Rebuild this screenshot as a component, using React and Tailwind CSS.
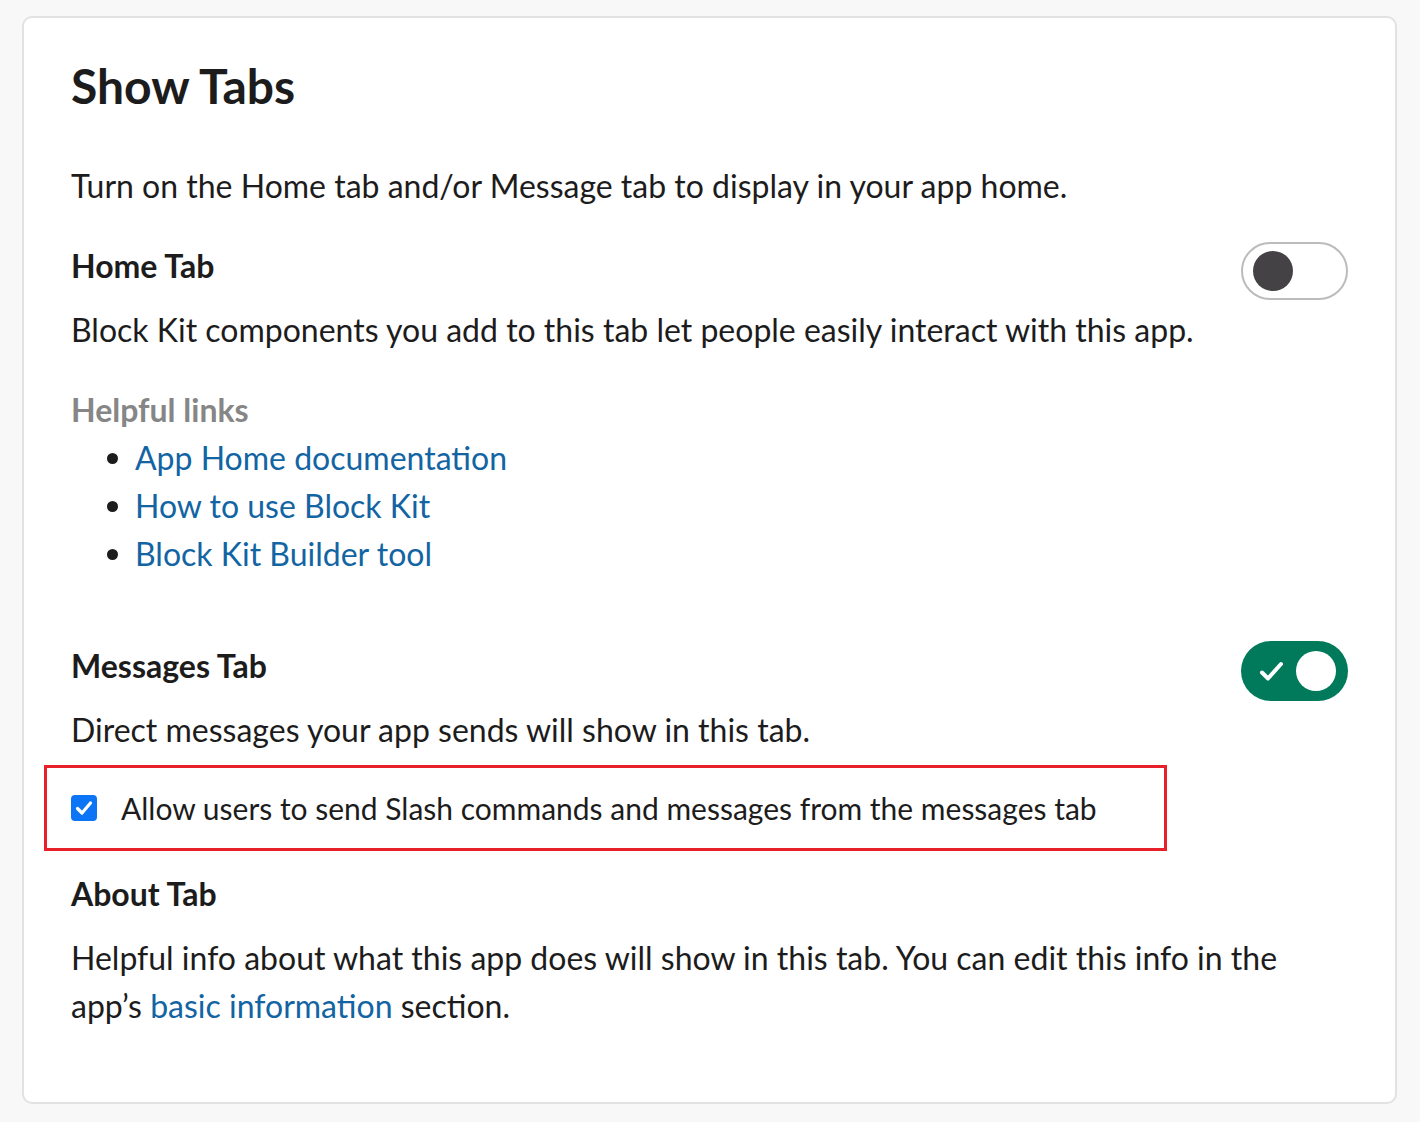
import React from 'react';

const links = ['App Home documentation', 'How to use Block Kit', 'Block Kit Builder tool'];

const ToggleOff = () => (
  <div className="w-[107px] h-[58px] rounded-full border-2 border-[#bcbcbc] bg-white flex items-center pl-[10px] shrink-0">
    <div className="w-[40px] h-[40px] rounded-full bg-[#454245]"></div>
  </div>
);

const ToggleOn = () => (
  <div className="w-[107px] h-[60px] rounded-full bg-[#007a5a] flex items-center justify-between pl-[18px] pr-[12px] shrink-0">
    <svg width="25" height="21" viewBox="0 0 25 21" fill="none">
      <path d="M3 11.5 L9 17.5 L22 3" stroke="white" strokeWidth="4" strokeLinecap="round" strokeLinejoin="round" />
    </svg>
    <div className="w-[40px] h-[40px] rounded-full bg-white"></div>
  </div>
);

const App = () => {
  return (
    <div className="min-h-screen bg-[#f8f8f8] pt-[16px] pl-[22px] pr-[23px] pb-[19px] font-['Lato',sans-serif] text-[#1d1c1d]">
      <div className="bg-white border-2 border-[#e2e2e2] rounded-[10px] pl-[48px] pr-[47px] pt-[40px] pb-[72px]">
        <h1 className="-ml-px -mt-px text-[48px] leading-[58px] font-bold">Show Tabs</h1>

        <p className="-ml-px mt-[47px] text-[32px] leading-[48px]">
          Turn on the Home tab and/or Message tab to display in your app home.
        </p>

        {/* Home tab */}
        <div className="mt-[32px] flex justify-between items-start">
          <h2 className="-ml-px text-[32px] leading-[48px] font-bold">Home Tab</h2>
          <ToggleOff />
        </div>
        <p className="-ml-px mt-[6px] text-[32px] leading-[48px]">
          Block Kit components you add to this tab let people easily interact with this app.
        </p>

        <h3 className="-ml-px mt-[32px] text-[32px] leading-[48px] font-bold text-[#868686]">Helpful links</h3>
        <ul>
          {links.map((link) => (
            <li key={link} className="flex items-center text-[32px] leading-[48px]">
              <span className="ml-[35px] w-[11px] h-[11px] rounded-full bg-[#1d1c1d]"></span>
              <a href="#" className="ml-[17px] text-[#1264a3]">{link}</a>
            </li>
          ))}
        </ul>

        {/* Messages tab */}
        <div className="mt-[63px] flex justify-between items-start">
          <h2 className="-ml-px mt-[1px] text-[32px] leading-[48px] font-bold">Messages Tab</h2>
          <ToggleOn />
        </div>
        <p className="-ml-px mt-[5px] text-[32px] leading-[48px]">
          Direct messages your app sends will show in this tab.
        </p>

        <div className="mt-[11px] ml-[-28px] w-[1123px] h-[86px] border-[3px] border-[#e8202a] flex items-center pl-[24px]">
          <div className="w-[26px] h-[26px] rounded-[4px] bg-[#0b75f5] flex items-center justify-center">
            <svg width="18" height="16" viewBox="0 0 18 16" fill="none">
              <path d="M2.5 8.5 L7 13 L15.5 3" stroke="white" strokeWidth="3.2" strokeLinecap="round" strokeLinejoin="round" />
            </svg>
          </div>
          <span className="ml-[24px] text-[30px] leading-[48px]">
            Allow users to send Slash commands and messages from the messages tab
          </span>
        </div>

        {/* About tab */}
        <h2 className="-ml-px mt-[19px] text-[32px] leading-[48px] font-bold">About Tab</h2>
        <p className="-ml-px mt-[16px] text-[32px] leading-[48px]">
          Helpful info about what this app does will show in this tab. You can edit this info in the app’s{' '}
          <a href="#" className="text-[#1264a3]">basic information</a> section.
        </p>
      </div>
    </div>
  );
};

export default App;
